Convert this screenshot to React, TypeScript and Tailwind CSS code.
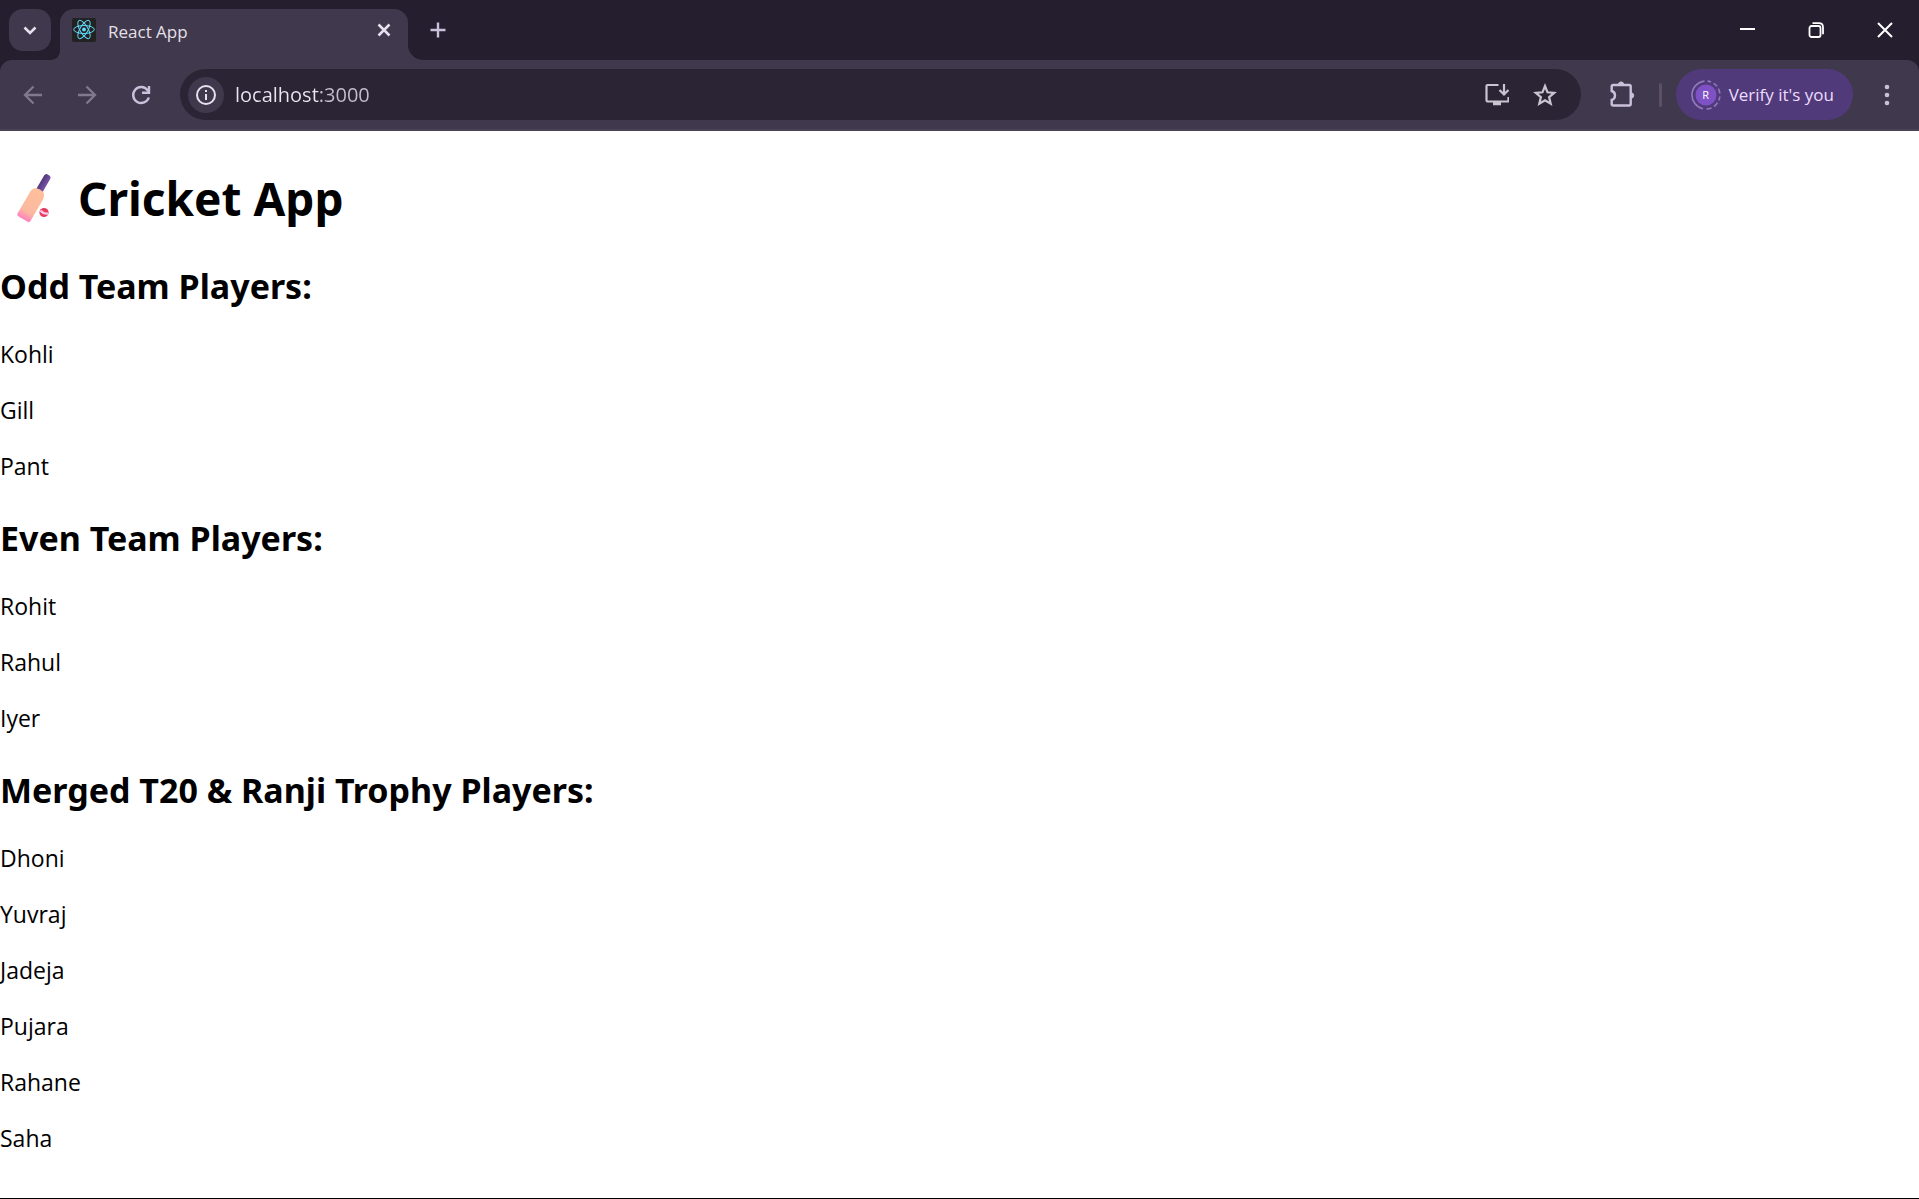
import React from "react";

const groups = [
  { title: "Odd Team Players:", players: ["Kohli", "Gill", "Pant"] },
  { title: "Even Team Players:", players: ["Rohit", "Rahul", "Iyer"] },
  {
    title: "Merged T20 & Ranji Trophy Players:",
    players: ["Dhoni", "Yuvraj", "Jadeja", "Pujara", "Rahane", "Saha"],
  },
];

function ReactLogo() {
  return (
    <svg className="size-6 shrink-0" viewBox="0 0 24 24" fill="none" stroke="#61dafb" strokeWidth="1">
      <rect width="24" height="24" rx="2" fill="#222" stroke="none" />
      <circle cx="12" cy="11.5" r="1.9" fill="#61dafb" stroke="none" />
      <ellipse cx="12" cy="11.5" rx="10.3" ry="4" />
      <ellipse cx="12" cy="11.5" rx="10.3" ry="4" transform="rotate(60 12 11.5)" />
      <ellipse cx="12" cy="11.5" rx="10.3" ry="4" transform="rotate(120 12 11.5)" />
    </svg>
  );
}

function CricketBat() {
  return (
    <svg className="h-16 w-[66px] shrink-0" viewBox="0 0 66 64" role="img" aria-label="Cricket bat and ball">
      <defs>
        <linearGradient id="blade" x1="0" y1="0" x2="0" y2="1">
          <stop offset="0" stopColor="#ffc09b" />
          <stop offset="0.75" stopColor="#fbb8a0" />
          <stop offset="1" stopColor="#ff7fc0" />
        </linearGradient>
        <linearGradient id="grip" x1="0" y1="0" x2="1" y2="0">
          <stop offset="0" stopColor="#503a78" />
          <stop offset="1" stopColor="#7852a8" />
        </linearGradient>
      </defs>
      <g transform="rotate(30 34 34)">
        <rect x="30.500" y="5" width="7" height="22" rx="3" fill="url(#grip)" />
        <path d="M26.500 29q0-7 7.500-7t7.500 7v25q0 2-2 2h-11q-2 0-2-2z" fill="url(#blade)" />
      </g>
      <circle cx="44" cy="46.500" r="4.600" fill="#e83a5c" />
      <path d="M40.500 44.500q3 3.800 7.500 3" stroke="#f8c8e4" strokeWidth="2.400" fill="none" />
    </svg>
  );
}

function TabStrip() {
  return (
    <header className="flex h-[60px] items-end bg-[#241e2e]">
      <div className="flex h-[51px] items-start pl-[9px]">
        <button type="button" aria-label="Search tabs" className="flex size-[42px] items-center justify-center rounded-[14px] bg-[#40384c]">
          <svg className="size-6" viewBox="0 0 24 24" fill="none" stroke="#e8e0ee" strokeWidth="2.600">
            <path d="M6.500 9.500l5.500 5.500 5.500-5.500" />
          </svg>
        </button>
      </div>
      <div className="h-[15px] w-[9px] overflow-hidden bg-[#40384c]">
        <div className="size-full rounded-br-[15px] bg-[#241e2e]" />
      </div>
      <div className="flex h-[51px] w-[348px] items-center gap-3 rounded-t-[14px] bg-[#40384c] pr-[14px] pb-[9px] pl-3">
        <ReactLogo />
        <span className="flex-1 pt-[3px] text-[17px] leading-6 text-[#e6e0e9]">React App</span>
        <button type="button" aria-label="Close tab" className="flex size-5 items-center justify-center">
          <svg className="size-5" viewBox="0 0 20 20" stroke="#e8e0ee" strokeWidth="2.500">
            <path d="M4.500 4.500l11 11M15.500 4.500l-11 11" />
          </svg>
        </button>
      </div>
      <div className="size-[15px] bg-[#40384c]">
        <div className="size-full rounded-bl-[15px] bg-[#241e2e]" />
      </div>
      <button type="button" aria-label="New tab" className="mb-[18px] ml-[3px] flex size-6 items-center justify-center">
        <svg className="size-6" viewBox="0 0 24 24" stroke="#cbc0dc" strokeWidth="2.400">
          <path d="M4.500 12h15M12 4.500v15" />
        </svg>
      </button>
      <div className="flex-1" />
      <div className="flex h-full items-center">
        <button type="button" aria-label="Minimize" className="flex h-full w-[69px] items-center justify-center">
          <svg className="size-4" viewBox="0 0 16 16" stroke="#fff" strokeWidth="2">
            <path d="M1 7h15" />
          </svg>
        </button>
        <button type="button" aria-label="Restore" className="flex h-full w-[69px] items-center justify-center">
          <svg className="size-4" viewBox="0 0 16 16" fill="none" stroke="#fff" strokeWidth="1.800">
            <rect x="1.500" y="4" width="11" height="11" rx="2" />
            <path d="M4.500 1.200h6.500q4 0 4 4v7" />
          </svg>
        </button>
        <button type="button" aria-label="Close" className="flex h-full w-[69px] items-center justify-center">
          <svg className="size-4" viewBox="0 0 16 16" stroke="#fff" strokeWidth="2">
            <path d="M1 1l14 14M15 1L1 15" />
          </svg>
        </button>
      </div>
    </header>
  );
}

function Toolbar() {
  return (
    <div className="bg-[#241e2e]">
      <div className="flex h-[71px] items-center rounded-t-[12px] border-b-2 border-[#4a4355] bg-[#40384c]">
        <button type="button" aria-label="Back" className="ml-[21px] flex size-6 items-center justify-center">
          <svg className="size-6" viewBox="0 0 24 24" fill="none" stroke="#82798e" strokeWidth="2.300">
            <path d="M21 12H4.500M12.500 3.500L4 12l8.500 8.500" />
          </svg>
        </button>
        <button type="button" aria-label="Forward" className="ml-[30px] flex size-6 items-center justify-center">
          <svg className="size-6" viewBox="0 0 24 24" fill="none" stroke="#82798e" strokeWidth="2.300">
            <path d="M3 12h16.500M11.500 3.500L20 12l-8.500 8.500" />
          </svg>
        </button>
        <button type="button" aria-label="Reload" className="ml-[30px] flex size-6 items-center justify-center">
          <svg className="size-6" viewBox="0 0 24 24" fill="none" stroke="#cbc0dc" strokeWidth="2.400">
            <path d="M19.800 14.500A8 8 0 1 1 18.600 7.200L20 9" />
            <path d="M20 3v6.800h-7" />
          </svg>
        </button>
        <div className="ml-[27px] flex h-[51px] flex-1 items-center rounded-full bg-[#2b2435] pr-6 pl-2">
          <button type="button" aria-label="View site information" className="flex size-9 items-center justify-center rounded-full bg-[#40384c]">
            <svg className="size-6" viewBox="0 0 24 24" fill="none" stroke="#e8e0ee" strokeWidth="2">
              <circle cx="12" cy="12" r="9" />
              <path d="M12 11v6M12 7v2" />
            </svg>
          </button>
          <input
            type="text"
            aria-label="Address"
            defaultValue="localhost:3000"
            className="ml-[11px] min-w-0 flex-1 bg-[linear-gradient(to_right,#ece6f0_84px,#c6bfcc_84px)] bg-clip-text text-[20px] leading-8 text-transparent caret-white outline-none"
          />
          <button type="button" aria-label="Install app" className="flex size-6 items-center justify-center">
            <svg className="size-6" viewBox="0 0 24 24" fill="none" stroke="#cbc4d0" strokeWidth="2.200">
              <path d="M13.500 2H2.500q-1 0-1 1v14q0 1.500 1 1.500h20q1 0 1-1V14M19 1v10M14.500 7l4.500 4.500L23.500 7" />
              <path d="M8 20.500h8" strokeWidth="3.500" />
            </svg>
          </button>
          <button type="button" aria-label="Bookmark this tab" className="ml-6 flex size-6 items-center justify-center">
            <svg className="size-6" viewBox="0 0 24 24" fill="none" stroke="#cbc4d0" strokeWidth="2.200">
              <path d="M12 3l2.500 6.300 6.700.5-5.100 4.300 1.600 6.600L12 17.200l-5.700 3.500 1.600-6.600-5.100-4.300 6.700-.5z" />
            </svg>
          </button>
        </div>
        <button type="button" aria-label="Extensions" className="ml-[28px] flex size-7 items-center justify-center">
          <svg className="size-7" viewBox="0 0 28 28" fill="none" stroke="#cbc0dc" strokeWidth="2.400">
            <path d="M2.700 5.500q0-1.500 1.500-1.500h16q1.500 0 1.500 1.500v17.500q0 1.500-1.500 1.500H4.200q-1.500 0-1.500-1.500V19q3.300-1 3.300-4.500t-3.300-4.500z" />
            <path d="M9.500 3.500a2.600 2.600 0 0 1 5.200 0zM22 11.800a2.600 2.600 0 0 1 0 5.400z" fill="#cbc0dc" strokeWidth="1" />
          </svg>
        </button>
        <div className="ml-[22px] h-6 w-[3px] rounded-full bg-[#5b5068]" />
        <button type="button" className="ml-[14px] flex h-[51px] items-center gap-2 rounded-full bg-[#513a7a] pr-[19px] pl-[15px] text-[17px] leading-6 whitespace-nowrap text-[#ecdcff]">
          <span className="relative flex size-[30px] items-center justify-center">
            <svg className="absolute size-[30px]" viewBox="0 0 30 30" fill="none">
              <circle cx="15" cy="15" r="10.500" fill="#7e52c4" />
              <path
                d="M13.500 1.100A14 14 0 0 0 12 28.700M15.500 29a14 14 0 0 0 5-1.100M23 26.500a14 14 0 0 0 3.500-3.700M27.800 20.500a14 14 0 0 0 1-4M28.800 13.500a14 14 0 0 0-1.400-4.800M26 6.300a14 14 0 0 0-3.300-3M20 1.900a14 14 0 0 0-3.500-.8"
                stroke="#9479bf"
                strokeWidth="1.600"
              />
            </svg>
            <span className="relative text-[11px] leading-none font-medium text-white">R</span>
          </span>
          <span>Verify it's you</span>
        </button>
        <button type="button" aria-label="Menu" className="mr-5 ml-[22px] flex size-6 items-center justify-center">
          <svg className="size-6" viewBox="0 0 24 24" fill="#cbc0dc">
            <circle cx="12" cy="4" r="2.300" />
            <circle cx="12" cy="12" r="2.300" />
            <circle cx="12" cy="20" r="2.300" />
          </svg>
        </button>
      </div>
    </div>
  );
}

export default function App() {
  return (
    <div className="flex min-h-screen flex-col border-b border-black bg-white font-['Segoe_UI','Open_Sans',sans-serif] text-black">
      <TabStrip />
      <Toolbar />
      <main className="flex-1 pt-[35px]">
        <h1 className="flex items-center gap-3 font-['Segoe_UI','Noto_Sans',sans-serif] text-[46px] leading-[64px] font-bold">
          <CricketBat />
          Cricket App
        </h1>
        {groups.map((group) => (
          <section key={group.title} className="pt-8">
            <h2 className="font-['Segoe_UI','Noto_Sans',sans-serif] text-[34px] leading-[48px] font-bold">{group.title}</h2>
            <div className="flex flex-col gap-6 pt-7">
              {group.players.map((player) => (
                <p key={player} className="text-[23px] leading-8">{player}</p>
              ))}
            </div>
          </section>
        ))}
      </main>
    </div>
  );
}
